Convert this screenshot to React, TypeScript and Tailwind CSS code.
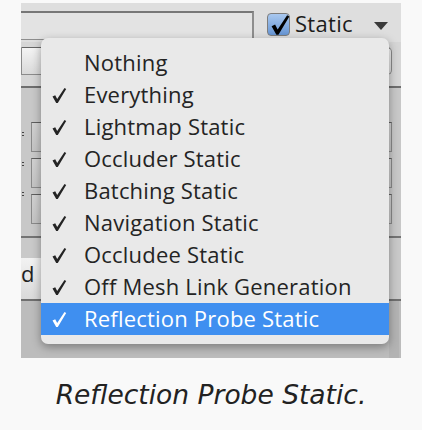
const items = [
  { label: "Nothing", checked: false },
  { label: "Everything", checked: true },
  { label: "Lightmap Static", checked: true },
  { label: "Occluder Static", checked: true },
  { label: "Batching Static", checked: true },
  { label: "Navigation Static", checked: true },
  { label: "Occludee Static", checked: true },
  { label: "Off Mesh Link Generation", checked: true },
  { label: "Reflection Probe Static", checked: true, active: true },
];

const Check = ({ className }: { className?: string }) => (
  <svg width="16" height="17" viewBox="0 0 16 17" className={className}>
    <path d="M1.5 9.5 L4.2 8.2 L6.2 12 L13.5 1 L15.2 1.9 L6.8 16 L5.2 16 Z" fill="currentColor" />
  </svg>
);

const Field = ({ className }: { className: string }) => (
  <div
    className={
      "border border-[#8a8a8a] border-t-[#5e5e5e] bg-gradient-to-b from-[#d2d2d2] to-[#c4c4c4] " +
      className
    }
  />
);

export default function App() {
  return (
    <div
      className="w-[422px] h-[430px] bg-[#f9f9f9] flex flex-col items-center"
      style={{ fontFamily: '"Open Sans", "Noto Sans", sans-serif' }}
    >
      <div className="relative mt-[3px] w-[380px] h-[355px] overflow-hidden bg-[#bebebe] flex flex-col">
        {/* top strip: name field + static toggle */}
        <div className="h-[39px] bg-[#dedede] flex items-start shrink-0">
          <div className="mt-[8px] w-[233px] h-[29px] border-t-2 border-r-2 border-b border-[#8d8d8d] border-t-[#777] bg-[#e3e3e3]" />
          <div className="ml-[13px] mt-[10px] w-[23px] h-[23px] rounded-[4px] border border-[#7d7d7d] bg-gradient-to-b from-[#a9c8ef] to-[#6796d4] relative">
            <Check className="absolute left-[1px] top-[0px] text-black w-[22px] h-[22px]" />
          </div>
          <span className="ml-[5px] mt-[3px] text-[22px] leading-[34px] text-[#1c1c1c] tracking-[0.3px]">Static</span>
          <svg width="14" height="8" viewBox="0 0 14 8" className="ml-[21px] mt-[19px]">
            <path d="M0 0 H14 L7 8 Z" fill="#3a3a3a" />
          </svg>
        </div>

        {/* layer row */}
        <div className="h-[46px] bg-[#d6d6d6] border-b-2 border-[#6e6e6e] shrink-0 pt-[5px]">
          <div className="w-[371px] h-[28px] rounded-r-[5px] border border-[#8b8b8b] border-t-[#666] bg-gradient-to-b from-[#f4f4f4] to-[#d9d9d9]" />
        </div>

        {/* transform fields */}
        <div className="h-[150px] bg-[#c8c8c8] border-b-2 border-[#747474] shrink-0 flex">
          <div className="w-[10px] flex flex-col gap-[26px] pt-[44px] pl-[1px]">
            <span className="w-[2px] h-[4px] border-y border-[#444]" />
            <span className="w-[2px] h-[4px] border-y border-[#444]" />
            <span className="w-[2px] h-[4px] border-y border-[#444]" />
          </div>
          <div className="flex flex-col gap-[6px] pt-[34px]">
            <Field className="w-[361px] h-[30px]" />
            <Field className="w-[361px] h-[30px]" />
            <Field className="w-[361px] h-[30px]" />
          </div>
        </div>

        {/* add component row */}
        <div className="h-[63px] bg-[#c9c9c9] border-b-2 border-[#6f6f6f] shrink-0 flex items-end">
          <div className="w-[22px] h-[41px] bg-gradient-to-b from-[#f2f2f2] to-[#dadada] text-[22px] leading-[30px] text-[#222] overflow-hidden">
            d
          </div>
        </div>

        <div className="flex-1 bg-[#bcbcbc] flex justify-end">
          <div className="w-[10px] mr-[2px] bg-[#b3b3b3]" />
        </div>

        {/* static flags menu */}
        <div className="absolute left-[20px] top-[35px] w-[348px] rounded-[7px] bg-[#e9e9e9] py-[9px] shadow-[0_3px_10px_rgba(0,0,0,0.35)]">
          {items.map((it) => (
            <div
              key={it.label}
              className={
                "h-[32px] flex items-center " +
                (it.active ? "bg-[#3f8ff0] text-white" : "text-[#242424]")
              }
            >
              <div className="w-[43px] pl-[10px] flex items-center">
                {it.checked && <Check />}
              </div>
              <span className="text-[22px] leading-[32px] tracking-[0.2px] -mt-[2px]">{it.label}</span>
            </div>
          ))}
        </div>
      </div>

      <p className="mt-[20px] text-[26.5px] leading-[34px] italic text-[#222] font-['DejaVu_Sans',sans-serif]">
        Reflection Probe Static.
      </p>
    </div>
  );
}
